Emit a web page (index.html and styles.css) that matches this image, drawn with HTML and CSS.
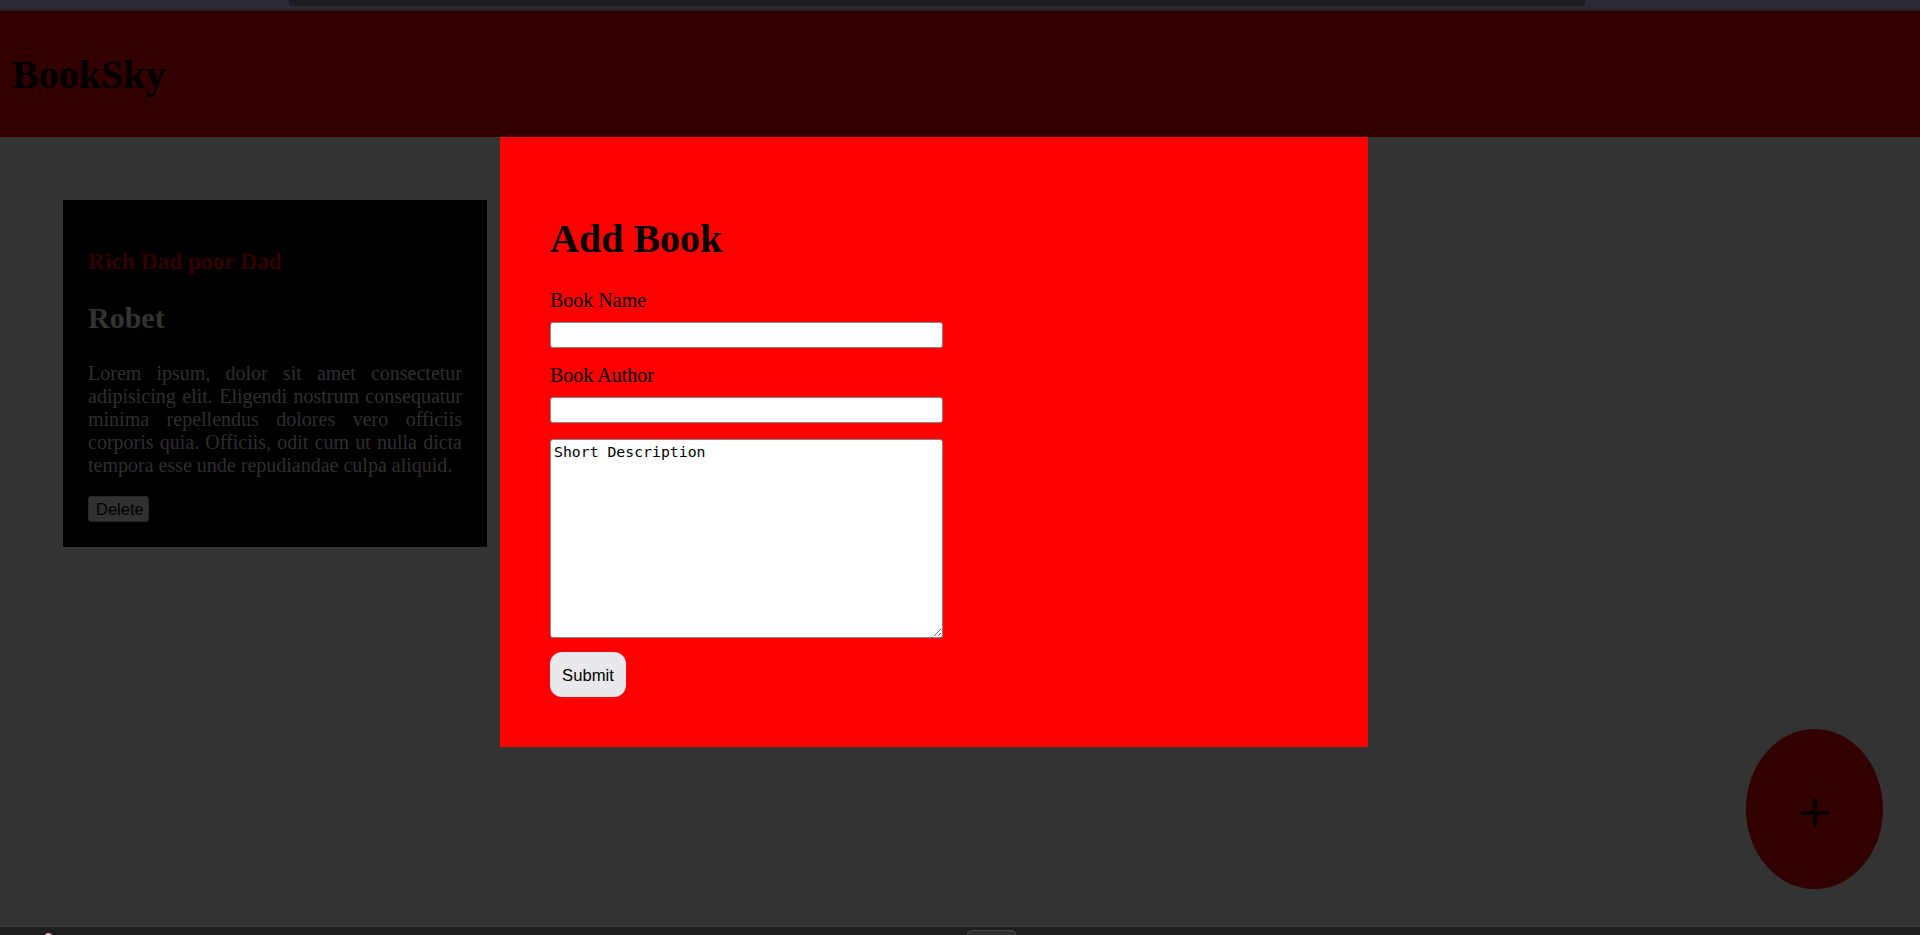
FILE: index.html
```html
<!DOCTYPE html>
<html lang="en">
<head>
<meta charset="utf-8">
<title>BookSky</title>
<link rel="stylesheet" href="styles.css">
</head>
<body>
<div class="chrome-top"><div class="chrome-bar"></div></div>
<div class="page">
  <header class="header">
    <h1 class="logo">BookSky</h1>
  </header>
  <main class="main">
    <article class="card">
      <h3 class="card-title">Rich Dad poor Dad</h3>
      <h2 class="card-author">Robet</h2>
      <p class="card-desc">Lorem ipsum, dolor sit amet consectetur adipisicing elit. Eligendi nostrum consequatur minima repellendus dolores vero officiis corporis quia. Officiis, odit cum ut nulla dicta tempora esse unde repudiandae culpa aliquid.</p>
      <button class="btn-delete" type="button">Delete</button>
    </article>
  </main>
  <button class="fab" type="button" aria-label="Add book">
    <svg class="fab-icon" width="30" height="30" viewBox="0 0 30 30"><path d="M15 1 V29 M1 15 H29" stroke="#000" stroke-width="3.5" fill="none"/></svg>
  </button>
  <section class="modal">
    <h1 class="modal-title">Add Book</h1>
    <form class="form">
      <label class="form-label" for="bname">Book Name</label>
      <input class="form-input" id="bname" type="text">
      <label class="form-label label-gap" for="bauthor">Book Author</label>
      <input class="form-input" id="bauthor" type="text">
      <textarea class="form-textarea">Short Description</textarea>
      <button class="btn-submit" type="button">Submit</button>
    </form>
  </section>
</div>
<div class="chrome-bottom">
  <div class="chrome-dot"></div>
  <div class="chrome-tab"></div>
</div>
</body>
</html>
```
FILE: styles.css
```css
html, body {
  margin: 0;
  padding: 0;
  height: 100%;
  overflow: hidden;
}
body {
  background: #333333;
  font-family: "Liberation Serif", "Times New Roman", serif;
  font-size: 20px;
  display: flex;
  flex-direction: column;
}
.chrome-top {
  height: 10px;
  background: #2b2a33;
  border-bottom: 1px solid #1f1e25;
  position: relative;
  flex: none;
}
.chrome-bar {
  position: absolute;
  left: 289px;
  width: 1296px;
  top: 0;
  height: 6px;
  background: #1c1b22;
  border-radius: 0 0 3px 3px;
}
.page {
  flex: 1;
  position: relative;
}
.header {
  height: 126px;
  background: #330000;
  display: flex;
  align-items: center;
  padding-left: 12px;
}
.logo {
  margin: 0;
  font-size: 40px;
  font-weight: bold;
  color: #000;
}
.main {
  padding: 63px;
}
.card {
  width: 374px;
  padding: 25px;
  background: #000;
  text-align: justify;
}
.card-title {
  font-size: 23.4px;
  margin: 23.4px 0;
  color: #330000;
}
.card-author {
  font-size: 30px;
  margin: 26px 0;
  color: #333333;
}
.card-desc {
  margin: 27px 0 19px;
  color: #2e2e2e;
  line-height: 23px;
}
.btn-delete {
  display: block;
  font-family: "Liberation Sans", Arial, sans-serif;
  font-size: 16.5px;
  color: #000;
  background: #313131;
  border: 1.25px solid #262626;
  border-radius: 3px;
  padding: 1px 7px;
  height: 26px;
  width: 61px;
}
.fab {
  position: absolute;
  right: 37px;
  bottom: 37px;
  width: 137px;
  height: 160px;
  border-radius: 50%;
  background: #330000;
  border: none;
  padding: 0;
  display: flex;
  align-items: center;
  justify-content: center;
}
.fab-icon {
  margin-top: 8px;
}
.modal {
  position: absolute;
  left: 500px;
  top: 126px;
  width: 768px;
  padding: 51px 50px 50px;
  background: #ff0000;
}
.modal-title {
  font-size: 40px;
  margin: 26.8px 0;
  color: #000;
}
.form {
  display: flex;
  flex-direction: column;
  align-items: flex-start;
}
.form-label {
  display: block;
  line-height: 23px;
  color: #000;
}
.label-gap {
  margin-top: 16px;
}
.form-input {
  box-sizing: border-box;
  width: 393px;
  height: 26px;
  margin-top: 10px;
  border: 1.25px solid #858585;
  border-radius: 3px;
  background: #fff;
  padding: 1px 3px;
}
.form-textarea {
  box-sizing: border-box;
  width: 393px;
  height: 199px;
  margin-top: 16px;
  border: 1.25px solid #858585;
  border-radius: 3px;
  background: #fff;
  padding: 3px 3px;
  font-family: "DejaVu Sans Mono", monospace;
  font-size: 14.8px;
  color: #000;
  resize: both;
}
.btn-submit {
  margin-top: 14px;
  width: 76px;
  height: 45px;
  border: none;
  border-radius: 12px;
  background: #e9e9ed;
  font-family: "Liberation Sans", Arial, sans-serif;
  font-size: 16.67px;
  color: #000;
  padding: 3px 0 0;
}
.chrome-bottom {
  flex: none;
  height: 8px;
  background: #1e1e1e;
  border-top: 1px solid #3c3c3c;
  position: relative;
  overflow: hidden;
}
.chrome-dot {
  position: absolute;
  left: 44px;
  top: 6px;
  width: 9px;
  height: 9px;
  border-radius: 50%;
  background: #e8a0b0;
}
.chrome-tab {
  position: absolute;
  left: 967px;
  top: 3px;
  width: 47px;
  height: 10px;
  background: #303030;
  border: 1px solid #454545;
  border-radius: 4px 4px 0 0;
}
```
